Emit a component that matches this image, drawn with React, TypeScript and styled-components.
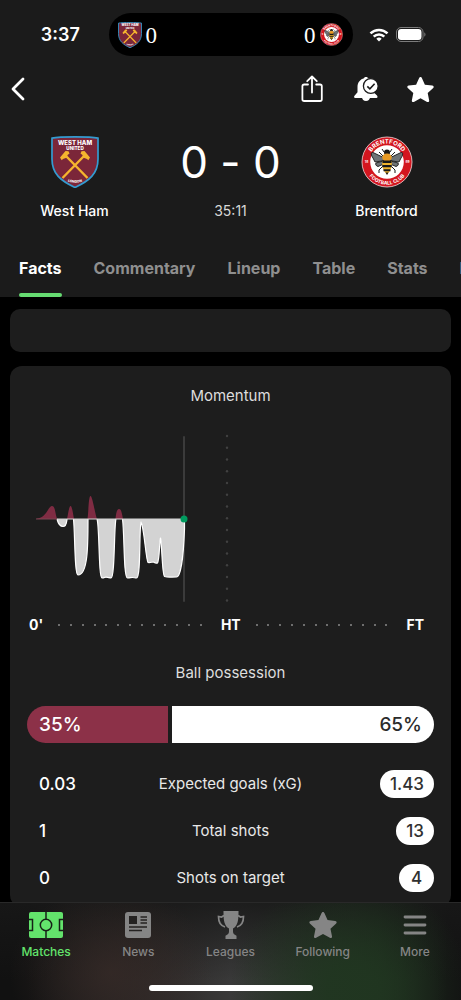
import React from "react";
import styled, { createGlobalStyle } from "styled-components";

const GlobalStyle = createGlobalStyle`
  * { box-sizing: border-box; }
  html, body { margin: 0; background: #000; }
  body { font-family: Inter, "Liberation Sans", sans-serif; color: #fff; }
  button { font: inherit; color: inherit; background: none; border: 0; padding: 0; cursor: pointer; }
  a { color: inherit; text-decoration: none; }
  svg { display: block; }
`;

const Screen = styled.div`
  display: flex;
  flex-direction: column;
  height: 100vh;
  overflow: hidden;
`;

const Header = styled.header`
  flex: none;
  background: #1b1b1b;
`;

const StatusBar = styled.div`
  display: grid;
  grid-template-columns: 1fr 244px 1fr;
  align-items: center;
  height: 69px;
`;

const Clock = styled.time`
  padding-left: 12px;
  text-align: center;
  font-size: 18px;
  font-weight: 600;
`;

const Island = styled.div`
  display: flex;
  align-items: center;
  justify-content: space-between;
  height: 43px;
  padding: 0 10px 0 9px;
  border-radius: 22px;
  background: #000;
`;

const IslandTeam = styled.div`
  display: flex;
  align-items: center;
  gap: 4px;
  font-family: "Liberation Serif", serif;
  font-size: 23px;
  line-height: 28px;
`;

const IslandScore = styled.span`
  padding-top: 3px;
`;

const Indicators = styled.div`
  display: flex;
  align-items: center;
  gap: 7px;
  padding-left: 16px;
`;

const Toolbar = styled.div`
  display: flex;
  align-items: center;
  height: 40px;
  padding-right: 14px;
`;

const IconButton = styled.button<{ $width: number }>`
  display: flex;
  align-items: center;
  justify-content: center;
  width: ${(p) => p.$width}px;
  height: 40px;
`;

const Spacer = styled.div`
  flex: 1;
`;

const Scoreboard = styled.section`
  display: grid;
  grid-template-columns: 1fr 163px 1fr;
  padding-top: 27px;
`;

const ScoreColumn = styled.div`
  display: flex;
  flex-direction: column;
  align-items: center;
  gap: 14px;
`;

const CrestBox = styled.div`
  display: flex;
  align-items: center;
  height: 52px;
`;

const Score = styled.div`
  font-size: 44px;
  line-height: 52px;
  font-weight: 400;
  font-feature-settings: "calt" 0;
`;

const TeamName = styled.div`
  font-size: 14px;
  line-height: 18px;
  font-weight: 500;
`;

const MatchClock = styled.div`
  font-size: 14px;
  line-height: 18px;
  color: #d8d8d8;
`;

const Tabs = styled.nav`
  display: flex;
  gap: 32px;
  padding: 19px 0 0 19px;
  overflow: hidden;
`;

const Tab = styled.a<{ $active?: boolean }>`
  flex: none;
  padding: 19px 0 15px;
  border-bottom: 4px solid transparent;
  font-size: 16px;
  line-height: 20px;
  font-weight: 700;
  color: ${(p) => (p.$active ? "#fff" : "#8f8f8f")};
  position: relative;
  &::after {
    content: "";
    display: ${(p) => (p.$active ? "block" : "none")};
    position: absolute;
    left: 0;
    right: 0;
    bottom: -4px;
    height: 4px;
    border-radius: 2px;
    background: #66dc72;
  }
`;

const Content = styled.main`
  flex: 1;
  min-height: 0;
  overflow-y: auto;
  scrollbar-width: none;
  padding: 12px 10px 0;
`;

const EmptyCard = styled.section`
  height: 43px;
  border-radius: 10px;
  background: #1d1d1d;
`;

const Card = styled.section`
  margin-top: 14px;
  padding: 20px 17px 6px;
  border-radius: 12px;
  background: #1d1d1d;
`;

const CardTitle = styled.h2`
  margin: 0;
  text-align: center;
  font-size: 15px;
  line-height: 20px;
  font-weight: 400;
  color: #dedede;
`;

const Chart = styled.svg`
  width: 100%;
  height: auto;
  margin: 24px 0 5px;
`;

const Axis = styled.div`
  display: flex;
  align-items: center;
  gap: 15px;
  height: 20px;
  padding: 0 10px 0 2px;
  font-size: 14px;
  line-height: 20px;
  font-weight: 700;
`;

const DotRow = styled.div<{ $grow: number }>`
  display: flex;
  flex: ${(p) => p.$grow} 1 0;
  justify-content: space-between;
  padding-right: 4px;
`;

const Dot = styled.span`
  width: 2px;
  height: 2px;
  border-radius: 1px;
  background: #8a8a8a;
`;

const PossessionTitle = styled(CardTitle)`
  margin-top: 28px;
`;

const Possession = styled.div`
  display: flex;
  gap: 4px;
  height: 37px;
  margin: 23px 0 17px;
  border-radius: 19px;
  overflow: hidden;
  font-size: 19px;
  line-height: 37px;
  font-weight: 500;
`;

const Share = styled.div<{ $value: number; $away?: boolean }>`
  flex: ${(p) => p.$value} 1 0;
  text-align: ${(p) => (p.$away ? "right" : "left")};
  color: ${(p) => (p.$away ? "#2b2b2b" : "#fff")};
  background: ${(p) => (p.$away ? "#fff" : "#8c3148")};
`;

const ShareText = styled.span`
  padding: 0 12px;
`;

const StatList = styled.dl`
  margin: 0;
`;

const StatRow = styled.div`
  display: grid;
  grid-template-columns: 1fr auto 1fr;
  align-items: center;
  height: 47px;
`;

const StatLabel = styled.dt`
  grid-column: 2;
  grid-row: 1;
  font-size: 15px;
  color: #e8e8e8;
`;

const HomeValue = styled.dd`
  grid-column: 1;
  grid-row: 1;
  margin: 0;
  padding-left: 12px;
  font-size: 17px;
  font-weight: 500;
`;

const AwayValue = styled.dd`
  grid-column: 3;
  grid-row: 1;
  justify-self: end;
  min-width: 35px;
  margin: 0;
  padding: 0 10px;
  border-radius: 14px;
  background: #fff;
  color: #303030;
  text-align: center;
  font-size: 17px;
  line-height: 28px;
  font-weight: 500;
`;

const BottomBar = styled.footer`
  flex: none;
  border-top: 1px solid #292929;
  background:
    radial-gradient(ellipse 26% 120% at 76% 90%, rgba(32, 54, 32, 0.9) 20%, rgba(32, 54, 32, 0) 100%),
    radial-gradient(ellipse 22% 90% at 24% 72%, rgba(54, 42, 39, 0.8), rgba(54, 42, 39, 0) 100%),
    linear-gradient(to bottom, rgba(24, 24, 24, 0.85), rgba(24, 24, 24, 0) 80%),
    linear-gradient(to right, #111 6%, #2c2827 32%, #393939 50%, #303530 64%, #203020 82%, #121212 97%);
`;

const BottomNav = styled.nav`
  display: flex;
`;

const NavItem = styled.a<{ $active?: boolean }>`
  flex: 1 1 0;
  display: flex;
  flex-direction: column;
  align-items: center;
  gap: 5px;
  padding-top: 7px;
  font-size: 12px;
  line-height: 16px;
  font-weight: 500;
  color: ${(p) => (p.$active ? "#63e36c" : "#858585")};
`;

const NavIcon = styled.span`
  display: flex;
  align-items: center;
  height: 29px;
`;

const HomeIndicator = styled.div`
  width: 164px;
  height: 6px;
  margin: 25px auto 9px;
  border-radius: 3px;
  background: #fff;
`;

const STAR =
  "M12 .8c.6 0 .9.4 1.2.9l2.7 6 6.6.8c1.2.2 1.6 1.3.8 2.2l-4.9 4.5 1.3 6.5c.2 1.2-.8 1.8-1.8 1.3L12 19.8 6.1 23c-1 .5-2-.1-1.8-1.3l1.3-6.5L.7 10.700c-.8-.9-.4-2 .8-2.200l6.600-.8 2.700-6c.3-.5.6-.9 1.200-.9z";

const StarIcon = ({ size }: { size: number }) => (
  <svg width={size} height={size} viewBox="0 0 24 24" fill="currentColor" aria-hidden>
    <path d={STAR} />
  </svg>
);

const WestHamCrest = ({ width, id }: { width: number; id: string }) => (
  <svg width={width} height={(width * 52) / 48} viewBox="0 0 48 52" role="img" aria-label="West Ham crest">
    <path d="M1 2.200C9 .4 39 .4 47 2.200V23c0 15-9 22-23 28.500C10 45 1 38 1 23z" fill="#7b2639" stroke="#349bd0" strokeWidth="1.700" />
    <g fontFamily="Inter, sans-serif" fontWeight="800" fill="#fff" textAnchor="middle">
      <text x="24" y="8.600" fontSize="6">WEST HAM</text>
      <text x="24" y="13.800" fontSize="4.600">UNITED</text>
      <path id={`${id}-base`} d="M13 43.500Q24 50 35 43.500" fill="none" />
      <text fontSize="3.400">
        <textPath href={`#${id}-base`} startOffset="50%">LONDON</textPath>
      </text>
    </g>
    <g stroke="#f6b52e" strokeWidth="2.400" fill="none">
      <path d="M14.500 19.500L36.500 42M33.500 19.500L11.500 42" />
    </g>
    <g fill="#f6b52e">
      <path d="M9 21.500l5.500-6.500 3 .2 1 2.300-2 1.500-.5 2.500-4 1.500-1.300 1.300z" />
      <path d="M39 21.500L33.500 15l-3 .2-1 2.300 2 1.500.5 2.500 4 1.500 1.300 1.300z" />
    </g>
  </svg>
);

const BrentfordCrest = ({ size, id }: { size: number; id: string }) => (
  <svg width={size} height={size} viewBox="0 0 52 52" role="img" aria-label="Brentford crest">
    <circle cx="26" cy="26" r="25" fill="#d3161f" stroke="#f2d9da" strokeWidth=".8" />
    <circle cx="26" cy="26" r="16.800" fill="#fff" />
    <path id={`${id}-top`} d="M7.500 26a18.500 18.500 0 0 1 37 0" fill="none" />
    <path id={`${id}-bottom`} d="M3.400 26a22.600 22.600 0 0 0 45.200 0" fill="none" />
    <g fontFamily="Inter, sans-serif" fontWeight="700" fill="#fff" textAnchor="middle">
      <text fontSize="6">
        <textPath href={`#${id}-top`} startOffset="50%">BRENTFORD</textPath>
      </text>
      <text fontSize="4.900">
        <textPath href={`#${id}-bottom`} startOffset="50%">FOOTBALL CLUB</textPath>
      </text>
      <text x="5.500" y="27.300" fontSize="3.200">18</text>
      <text x="46.500" y="27.300" fontSize="3.200">89</text>
    </g>
    <g fill="#6f7477" stroke="#191919" strokeWidth=".9">
      <path d="M23.500 22L12 16.500c-2.500-.5-2 3 0 5.500l2 4 10-1.500zM28.500 22L40 16.500c2.500-.5 2 3 0 5.500l-2 4-10-1.500z" />
      <path d="M24 24.500l-9 2.500c-1 1 0 3 2 3.500l7-3zM28 24.500l9 2.500c1 1 0 3-2 3.500l-7-3z" />
    </g>
    <path d="M23 16l-2-3M29 16l2-3M22 30l-4 4v3M30 30l4 4v3M22 20l-4-4M30 20l4-4" stroke="#191919" fill="none" />
    <circle cx="26" cy="16.500" r="3" fill="#191919" />
    <ellipse cx="26" cy="21.500" rx="4.800" ry="4" fill="#e79a24" />
    <path d="M21.500 25h9c1 5-.5 10-4.500 13.500-4-3.500-5.500-8.500-4.500-13.500z" fill="#f0b32c" />
    <path d="M21.500 24.500h9v2.400h-9zM21.300 29h9.400v2.200h-9.400zM22.500 33.200h7v2h-7zM24.500 36.600h3L26 39z" fill="#191919" />
  </svg>
);

const WifiIcon = () => (
  <svg width="20" height="14" viewBox="0 0 20 14" fill="none" stroke="#fff" strokeWidth="2.600" aria-hidden>
    <path d="M1.500 5.400a12.200 12.200 0 0 1 17 0M4.700 8.600a7.600 7.600 0 0 1 10.600 0" />
    <path d="M10 13.600l-2.700-2.800a3.800 3.800 0 0 1 5.400 0z" fill="#fff" stroke="none" />
  </svg>
);

const BatteryIcon = () => (
  <svg width="30" height="15" viewBox="0 0 30 15" aria-hidden>
    <rect x=".5" y=".5" width="26.500" height="14" rx="4.500" fill="none" stroke="#7c7c7c" />
    <rect x="2" y="2" width="23.500" height="11" rx="3.200" fill="#fff" />
    <path d="M28.300 5.300c1.600.7 1.600 3.700 0 4.400z" fill="#7c7c7c" />
  </svg>
);

const BackIcon = () => (
  <svg width="14" height="24" viewBox="0 0 14 24" fill="none" stroke="#fff" strokeWidth="2.800" strokeLinecap="round" strokeLinejoin="round" aria-hidden>
    <path d="M12 2L2 12l10 10" />
  </svg>
);

const ShareIcon = () => (
  <svg width="22" height="28" viewBox="0 0 22 28" fill="none" stroke="#fff" strokeWidth="1.800" strokeLinecap="round" strokeLinejoin="round" aria-hidden>
    <path d="M7 9.500H3.200A1.800 1.800 0 0 0 1.400 11.300V24.200A1.800 1.800 0 0 0 3.200 26H19a1.800 1.800 0 0 0 1.800-1.800V11.300A1.800 1.800 0 0 0 19 9.500h-3.800M11 17.500V1.500M6.200 6.200L11 1.500l4.800 4.700" />
  </svg>
);

const BellIcon = () => (
  <svg width="26" height="26" viewBox="0 0 26 26" aria-hidden>
    <path d="M11 2.200c.3-1.600 3.700-1.600 4 0 3.500 1 5.500 4 5.500 8.500v5.500l3.500 3.300c1 1.500.5 2.500-.6 2.500H2.300C1 22 .7 20.800 1.500 19.700l3-3.500v-5.500c0-4.500 3-7.500 6.500-8.500zM9 21h8c0 2.600-1.800 4-4 4s-4-1.400-4-4z" fill="#fff" />
    <circle cx="17.800" cy="10" r="7.400" fill="#fff" stroke="#1b1b1b" strokeWidth="1.300" />
    <path d="M14.300 10.300l2.600 2.500 4.700-5" fill="none" stroke="#1b1b1b" strokeWidth="1.600" />
  </svg>
);

const PitchIcon = () => (
  <svg width="36" height="26" viewBox="0 0 36 26" aria-hidden>
    <rect x="1" width="34" height="26" rx="2" fill="currentColor" />
    <g fill="none" stroke="#172017" strokeWidth="1.500">
      <path d="M18 0v7M18 19v7M1 7.500h3.500v11H1M35 7.500h-3.500v11H35" />
      <circle cx="18" cy="13" r="5.700" />
    </g>
  </svg>
);

const NewsIcon = () => (
  <svg width="26" height="26" viewBox="0 0 26 26" aria-hidden>
    <rect width="26" height="26" rx="3" fill="currentColor" />
    <path d="M4 4h8v8H4z" fill="#242221" />
    <path d="M15.500 5H22M15.500 8H22M15.500 11H22M4 15h18M4 18.500h13" stroke="#242221" strokeWidth="1.400" />
  </svg>
);

const TrophyIcon = () => (
  <svg width="28" height="28" viewBox="0 0 28 28" aria-hidden>
    <path d="M6.500 0h15v2c0 8-1 13-5.500 15.500v3c0 2 1 3 3.500 4.200V28h-11v-3.300c2.500-1.200 3.500-2.200 3.500-4.200v-3C7.500 15 6.500 10 6.500 2z" fill="currentColor" />
    <path d="M7 4.500L4.500 6 1.500 5.500c0 6 3 9.500 6.500 10.500M21 4.500L23.500 6l3-.5c0 6-3 9.500-6.500 10.500" fill="none" stroke="currentColor" strokeWidth="1.700" />
  </svg>
);

const MenuIcon = () => (
  <svg width="24" height="20" viewBox="0 0 24 20" stroke="currentColor" strokeWidth="2.800" strokeLinecap="round" aria-hidden>
    <path d="M2 2h20M2 10h20M2 18h20" />
  </svg>
);

const HALF_TIME_DOTS = Array.from({ length: 15 }, (_, i) => 6 + i * 11.75);

const MomentumChart = () => (
  <Chart viewBox="0 0 407 180" role="img" aria-label="Momentum by minute">
    <path d="M157 7v164" stroke="#3b3b3b" strokeWidth="2" strokeLinecap="round" />
    {HALF_TIME_DOTS.map((y) => (
      <circle key={y} cx="200" cy={y} r="1.200" fill="#414141" />
    ))}
    <g fill="#7f2c43">
      <path d="M9 89c4-1 7-2 10-6 2-3 4-7 6-7 3 0 3 6 5 13z" />
      <path d="M40 89c1-4 2-13 3.500-13S46 83 47 89z" />
      <path d="M60.500 89c1-6 1-23 3-23S68 84 70 89z" />
      <path d="M88.500 89c.5-4 1-10 3.500-10s3 5 4 10z" />
    </g>
    <g fill="#d3d3d3" stroke="#fff" strokeWidth="1.200" strokeLinejoin="round">
      <path d="M30 89c1 4 3 7.500 6 7.500 3.500 0 3.500-4 4-7.500" />
      <path d="M46.500 89C48 103 47.500 145 51 145c10 0 10-30 10-56" />
      <path d="M70 89c2.500 6 1.500 59 5 59 3 0 2-.8 4-.8s3.500.8 5 .8c4 0 3-53 5-59" />
      <path d="M95.500 89c2 15 1 59 5 59 3 0 3-.5 5-.5s2 .5 4 .5c4.500 0 2.500-46 4.500-56 3 5 5 38 7 40.500 2 .5 4-.5 5.500-.5 1.500 1 3 1.500 4 1 2-3 2-22 3-25 1.500 6 1.500 36 4 38.500 3 1 6 .5 12 .5 4 0 7-20 8-48V89" />
    </g>
    <path d="M30 89H157" stroke="#d3d3d3" strokeWidth="1.200" />
    <path d="M9 89H30" stroke="#7a4653" />
    <circle cx="157" cy="89" r="3.500" fill="#009b5f" />
  </Chart>
);

const Dots = ({ count }: { count: number }) => (
  <DotRow $grow={count - 1} aria-hidden>
    {Array.from({ length: count }, (_, i) => (
      <Dot key={i} />
    ))}
  </DotRow>
);

const tabs = ["Facts", "Commentary", "Lineup", "Table", "Stats", "H2H"];

const stats = [
  { label: "Expected goals (xG)", home: "0.03", away: "1.43" },
  { label: "Total shots", home: "1", away: "13" },
  { label: "Shots on target", home: "0", away: "4" },
];

const navItems = [
  { label: "Matches", icon: <PitchIcon /> },
  { label: "News", icon: <NewsIcon /> },
  { label: "Leagues", icon: <TrophyIcon /> },
  { label: "Following", icon: <StarIcon size={28} /> },
  { label: "More", icon: <MenuIcon /> },
];

export default function App() {
  return (
    <Screen>
      <GlobalStyle />
      <Header>
        <StatusBar>
          <Clock>3:37</Clock>
          <Island>
            <IslandTeam>
              <WestHamCrest width={24} id="island-home" />
              <IslandScore>0</IslandScore>
            </IslandTeam>
            <IslandTeam>
              <IslandScore>0</IslandScore>
              <BrentfordCrest size={23} id="island-away" />
            </IslandTeam>
          </Island>
          <Indicators>
            <WifiIcon />
            <BatteryIcon />
          </Indicators>
        </StatusBar>
        <Toolbar>
          <IconButton $width={35} aria-label="Back"><BackIcon /></IconButton>
          <Spacer />
          <IconButton $width={54} aria-label="Share"><ShareIcon /></IconButton>
          <IconButton $width={54} aria-label="Notifications"><BellIcon /></IconButton>
          <IconButton $width={54} aria-label="Favourite"><StarIcon size={27} /></IconButton>
        </Toolbar>
        <Scoreboard>
          <ScoreColumn>
            <CrestBox><WestHamCrest width={48} id="home" /></CrestBox>
            <TeamName>West Ham</TeamName>
          </ScoreColumn>
          <ScoreColumn>
            <Score>0 - 0</Score>
            <MatchClock>35:11</MatchClock>
          </ScoreColumn>
          <ScoreColumn>
            <CrestBox><BrentfordCrest size={52} id="away" /></CrestBox>
            <TeamName>Brentford</TeamName>
          </ScoreColumn>
        </Scoreboard>
        <Tabs>
          {tabs.map((tab, i) => (
            <Tab key={tab} href="#" $active={i === 0}>{tab}</Tab>
          ))}
        </Tabs>
      </Header>
      <Content>
        <EmptyCard />
        <Card>
          <CardTitle>Momentum</CardTitle>
          <MomentumChart />
          <Axis>
            <span>0'</span>
            <Dots count={13} />
            <span>HT</span>
            <Dots count={12} />
            <span>FT</span>
          </Axis>
          <PossessionTitle>Ball possession</PossessionTitle>
          <Possession>
            <Share $value={35}><ShareText>35%</ShareText></Share>
            <Share $value={65} $away><ShareText>65%</ShareText></Share>
          </Possession>
          <StatList>
            {stats.map((s) => (
              <StatRow key={s.label}>
                <StatLabel>{s.label}</StatLabel>
                <HomeValue>{s.home}</HomeValue>
                <AwayValue>{s.away}</AwayValue>
              </StatRow>
            ))}
          </StatList>
        </Card>
      </Content>
      <BottomBar>
        <BottomNav>
          {navItems.map((item, i) => (
            <NavItem key={item.label} href="#" $active={i === 0}>
              <NavIcon>{item.icon}</NavIcon>
              {item.label}
            </NavItem>
          ))}
        </BottomNav>
        <HomeIndicator />
      </BottomBar>
    </Screen>
  );
}
